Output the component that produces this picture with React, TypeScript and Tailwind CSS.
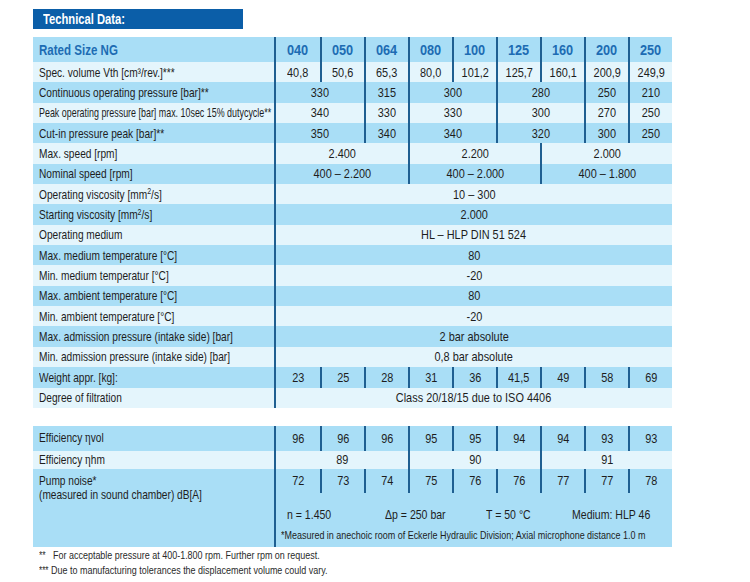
import React from "react";

type Cell = [React.ReactNode, number];
type Row = { label: React.ReactNode; dark: boolean; cells: Cell[]; squeeze?: boolean };

const spanClass: Record<number, string> = {
  1: "col-span-1",
  2: "col-span-2",
  3: "col-span-3",
  9: "col-span-9",
};

const all = (vals: string[]): Cell[] => vals.map((v) => [v, 1]);

// condensed look: the sheet uses a narrow grotesk, we squeeze Liberation Sans
function Lbl({ children, tight }: { children: React.ReactNode; tight?: boolean }) {
  return (
    <span className={`inline-block origin-left whitespace-nowrap ${tight ? "scale-x-[0.685]" : "scale-x-[0.78]"}`}>
      {children}
    </span>
  );
}

function Val({ children }: { children: React.ReactNode }) {
  return <span className="inline-block origin-center scale-x-[0.84] whitespace-nowrap">{children}</span>;
}

const sup2 = <sup className="text-[9px]">2</sup>;
const eta = <span className="font-['Liberation_Serif',serif] text-[14px]">η</span>;

const rows: Row[] = [
  { label: "Spec. volume Vth [cm³/rev.]***", dark: false, cells: all(["40,8", "50,6", "65,3", "80,0", "101,2", "125,7", "160,1", "200,9", "249,9"]) },
  { label: "Continuous operating pressure [bar]**", dark: true, cells: [["330", 2], ["315", 1], ["300", 2], ["280", 2], ["250", 1], ["210", 1]] },
  { label: "Peak operating pressure [bar] max. 10sec 15% dutycycle**", dark: false, squeeze: true, cells: [["340", 2], ["330", 1], ["330", 2], ["300", 2], ["270", 1], ["250", 1]] },
  { label: "Cut-in pressure peak [bar]**", dark: true, cells: [["350", 2], ["340", 1], ["340", 2], ["320", 2], ["300", 1], ["250", 1]] },
  { label: "Max. speed [rpm]", dark: false, cells: [["2.400", 3], ["2.200", 3], ["2.000", 3]] },
  { label: "Nominal speed [rpm]", dark: true, cells: [["400 – 2.200", 3], ["400 – 2.000", 3], ["400 – 1.800", 3]] },
  { label: <>Operating viscosity [mm{sup2}/s]</>, dark: false, cells: [["10 – 300", 9]] },
  { label: <>Starting viscosity [mm{sup2}/s]</>, dark: true, cells: [["2.000", 9]] },
  { label: "Operating medium", dark: false, cells: [["HL – HLP DIN 51 524", 9]] },
  { label: "Max. medium temperature [°C]", dark: true, cells: [["80", 9]] },
  { label: "Min. medium temperatur [°C]", dark: false, cells: [["-20", 9]] },
  { label: "Max. ambient temperature [°C]", dark: true, cells: [["80", 9]] },
  { label: "Min. ambient temperature [°C]", dark: false, cells: [["-20", 9]] },
  { label: "Max. admission pressure (intake side) [bar]", dark: true, cells: [["2 bar absolute", 9]] },
  { label: "Min. admission pressure (intake side) [bar]", dark: false, cells: [["0,8 bar absolute", 9]] },
  { label: "Weight appr. [kg]:", dark: true, cells: all(["23", "25", "28", "31", "36", "41,5", "49", "58", "69"]) },
  { label: "Degree of filtration", dark: false, cells: [["Class 20/18/15 due to ISO 4406", 9]] },
];

function TableRow({ row, height }: { row: Row; height: string }) {
  const bg = row.dark ? "bg-[#a9def6]" : "bg-[#e4f5fc]";
  return (
    <div className={`flex ${height} ${bg}`}>
      <div className="flex w-[243px] items-center overflow-visible border-r-2 border-[#1f5f91] pl-[6px]">
        <Lbl tight={row.squeeze}>{row.label}</Lbl>
      </div>
      <div className="grid w-[396px] grid-cols-9">
        {row.cells.map(([v, s], i) => (
          <div
            key={i}
            className={`${spanClass[s]} flex items-center justify-center ${i > 0 ? "border-l-2 border-[#1f5f91]" : ""}`}
          >
            <Val>{v}</Val>
          </div>
        ))}
      </div>
    </div>
  );
}

export default function App() {
  const sizes = ["040", "050", "064", "080", "100", "125", "160", "200", "250"];
  return (
    <div className="h-[582px] w-[750px] bg-white pl-[33px] pt-[9px] text-[13px] leading-none text-[#1d1d1d] font-['Liberation_Sans',Arial,sans-serif]">
      <div className="flex h-[20px] w-[210px] items-center bg-[#0b5ea8] pl-[10px] text-[14px] font-bold text-white">
        <span className="inline-block origin-left scale-x-[0.8] whitespace-nowrap">Technical Data:</span>
      </div>

      <div className="mt-[8px] w-[639px]">
        <div className="flex h-[25px] bg-[#a9def6] text-[15px] font-bold text-[#1d6cb3]">
          <div className="flex w-[243px] items-center border-r-2 border-[#1f5f91] pl-[6px]">
            <span className="inline-block origin-left scale-x-[0.77] whitespace-nowrap">Rated Size NG</span>
          </div>
          <div className="grid w-[396px] grid-cols-9">
            {sizes.map((s, i) => (
              <div key={s} className={`flex items-center justify-center ${i > 0 ? "border-l-2 border-[#1f5f91]" : ""}`}>
                <span className="inline-block scale-x-[0.85]">{s}</span>
              </div>
            ))}
          </div>
        </div>
        {rows.map((r, i) => (
          <TableRow key={i} row={r} height="h-[20.35px]" />
        ))}
      </div>

      <div className="mt-[18px] w-[639px]">
        <TableRow
          row={{ label: <>Efficiency {eta}vol</>, dark: true, cells: all(["96", "96", "96", "95", "95", "94", "94", "93", "93"]) }}
          height="h-[25px]"
        />
        <TableRow
          row={{ label: <>Efficiency {eta}hm</>, dark: false, cells: [["89", 3], ["90", 3], ["91", 3]] }}
          height="h-[18px]"
        />
        <div className="flex h-[78px] bg-[#a9def6]">
          <div className="w-[243px] border-r-2 border-[#1f5f91] pl-[6px] pt-[5px] leading-[14px]">
            <Lbl>Pump noise*</Lbl>
            <br />
            <Lbl>(measured in sound chamber) dB[A]</Lbl>
          </div>
          <div className="w-[396px]">
            <div className="grid h-[24px] grid-cols-9">
              {["72", "73", "74", "75", "76", "76", "77", "77", "78"].map((v, i) => (
                <div key={i} className={`flex items-center justify-center ${i > 0 ? "border-l-2 border-[#1f5f91]" : ""}`}>
                  <Val>{v}</Val>
                </div>
              ))}
            </div>
            <div className="mt-[15px] flex pl-[11px] text-[13.5px]">
              <span className="w-[100px]"><Lbl>n = 1.450</Lbl></span>
              <span className="w-[103px]"><Lbl>Δp = 250 bar</Lbl></span>
              <span className="w-[87px]"><Lbl>T = 50 °C</Lbl></span>
              <span><Lbl>Medium: HLP 46</Lbl></span>
            </div>
            <div className="mt-[9px] pl-[5px] text-[11.5px]">
              <Lbl>*Measured in anechoic room of Eckerle Hydraulic Division; Axial microphone distance 1.0 m</Lbl>
            </div>
          </div>
        </div>
      </div>

      <div className="pl-[6px] pt-[1px] text-[11.5px] leading-[15px] text-[#2a2a2a]">
        <div className="flex">
          <span className="w-[14px] text-[11px]"><Lbl>**</Lbl></span>
          <Lbl>For acceptable pressure at 400-1.800 rpm. Further rpm on request.</Lbl>
        </div>
        <div className="flex">
          <span className="w-[12px] text-[10.5px]"><Lbl>***</Lbl></span>
          <Lbl>Due to manufacturing tolerances the displacement volume could vary.</Lbl>
        </div>
      </div>
    </div>
  );
}
